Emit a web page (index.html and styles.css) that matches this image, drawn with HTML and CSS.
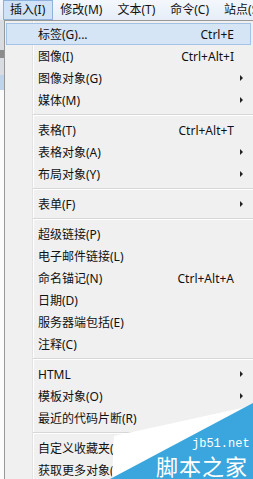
FILE: index.html
```html
<!DOCTYPE html>
<html>
  <head>
    <meta charset="UTF-8">
    <title>插入菜单</title>
    <link rel="stylesheet" href="styles.css">
  </head>
  <body>
    <div class="screen">
      <div class="menubar">
        <span class="bar-item active">插入(I)</span>
        <span class="bar-item">修改(M)</span>
        <span class="bar-item">文本(T)</span>
        <span class="bar-item">命令(C)</span>
        <span class="bar-item">站点(S)</span>
      </div>

      <div class="workarea">
        <div class="backdrop">
          <div class="bd-light"></div>
          <div class="bd-dark"></div>
          <div class="bd-light short"></div>
          <div class="bd-blue"></div>
          <div class="bd-white"></div>
        </div>

        <div class="dropdown">
          <div class="item hover"><span class="label">标签(G)...</span><span class="keys">Ctrl+E</span><span class="sub"></span></div>
          <div class="item"><span class="label">图像(I)</span><span class="keys">Ctrl+Alt+I</span><span class="sub"></span></div>
          <div class="item"><span class="label">图像对象(G)</span><span class="sub arrow"></span></div>
          <div class="item"><span class="label">媒体(M)</span><span class="sub arrow"></span></div>
          <div class="sep"></div>
          <div class="item"><span class="label">表格(T)</span><span class="keys">Ctrl+Alt+T</span><span class="sub"></span></div>
          <div class="item"><span class="label">表格对象(A)</span><span class="sub arrow"></span></div>
          <div class="item"><span class="label">布局对象(Y)</span><span class="sub arrow"></span></div>
          <div class="sep"></div>
          <div class="item"><span class="label">表单(F)</span><span class="sub arrow"></span></div>
          <div class="sep"></div>
          <div class="item"><span class="label">超级链接(P)</span><span class="sub"></span></div>
          <div class="item"><span class="label">电子邮件链接(L)</span><span class="sub"></span></div>
          <div class="item"><span class="label">命名锚记(N)</span><span class="keys">Ctrl+Alt+A</span><span class="sub"></span></div>
          <div class="item"><span class="label">日期(D)</span><span class="sub"></span></div>
          <div class="item"><span class="label">服务器端包括(E)</span><span class="sub"></span></div>
          <div class="item"><span class="label">注释(C)</span><span class="sub"></span></div>
          <div class="sep"></div>
          <div class="item"><span class="label">HTML</span><span class="sub arrow"></span></div>
          <div class="item"><span class="label">模板对象(O)</span><span class="sub arrow"></span></div>
          <div class="item"><span class="label">最近的代码片断(R)</span><span class="sub"></span></div>
          <div class="sep"></div>
          <div class="item"><span class="label">自定义收藏夹(U)</span><span class="sub"></span></div>
          <div class="item"><span class="label">获取更多对象(B)</span><span class="sub"></span></div>
        </div>
      </div>

      <!-- site watermark in the corner -->
      <div class="watermark">
        <svg width="153" height="79" viewBox="0 0 153 79">
          <polygon points="14,36 151,6 12,79" fill="#ffffff"/>
          <polygon points="153,3 153,79 10,79" fill="#3aa6dd"/>
        </svg>
        <div class="wm-url">jb51.net</div>
        <div class="wm-name">脚本之家</div>
      </div>
    </div>
  </body>
</html>
```

FILE: styles.css
```css
body {
  margin: 0;
  padding: 0;
  background: #f0f0f0;
  font-family: "Noto Sans", "Noto Sans CJK SC", sans-serif;
  font-size: 12px;
  color: #111;
}
.screen {
  position: relative;
  width: 253px;
  height: 479px;
  overflow: hidden;
}

/* top menu bar */
.menubar {
  display: flex;
  height: 20px;
  padding-left: 3px;
  background: linear-gradient(#f4f8fd, #e6edf7);
  white-space: nowrap;
}
.bar-item {
  display: flex;
  align-items: center;
  padding: 0 7px 0 6px;
  border: 1px solid transparent;
  line-height: 18px;
}
.bar-item.active {
  background: #cfe2f6;
  border-color: #8fb2da;
}

.workarea {
  display: flex;
  height: 459px;
}

/* bits of the window behind the menu */
.backdrop {
  display: flex;
  flex-direction: column;
  width: 4px;
  flex-shrink: 0;
  background: #fbfbfb;
}
.bd-light {
  height: 30px;
  background: #d9dde2;
}
.bd-light.short {
  height: 17px;
}
.bd-dark {
  height: 8px;
  background: #8c8c8c;
}
.bd-blue {
  height: 15px;
  background: #bfd3ea;
}
.bd-white {
  flex: 1;
  background: #fbfbfb;
}

/* dropdown */
.dropdown {
  flex: 1;
  border-left: 1px solid #979797;
  border-top: 1px solid #979797;
  padding-top: 2px;
  background: linear-gradient(to right, transparent 27px, #e3e3e3 27px, #e3e3e3 28px, #ffffff 28px, #ffffff 29px, transparent 29px), #f0f0f0;
}
.item {
  display: flex;
  align-items: center;
  height: 22px;
  box-sizing: border-box;
  margin: 0 2px 0 1px;
  padding-left: 31px;
  border: 1px solid transparent;
  white-space: nowrap;
}
.item.hover {
  background: #d6e5f6;
  border-color: #a3c2e6;
}
.label {
  flex: 1;
}
.keys {
  text-align: right;
}
.sub {
  width: 16px;
  flex-shrink: 0;
  display: flex;
  justify-content: flex-start;
  padding-left: 6px;
  box-sizing: border-box;
}
.sub.arrow::before {
  content: "";
  border-left: 3px solid #222;
  border-top: 3px solid transparent;
  border-bottom: 3px solid transparent;
}
.sep {
  margin: 3px 0 3px 28px;
  border-top: 1px solid #d7d7d7;
  border-bottom: 1px solid #ffffff;
  height: 0;
}

/* watermark overlay */
.watermark {
  position: absolute;
  left: 100px;
  top: 400px;
  width: 153px;
  height: 79px;
}
.watermark svg {
  display: block;
}
.wm-url {
  position: absolute;
  left: 92px;
  top: 38px;
  font-family: "Liberation Mono", monospace;
  font-size: 12px;
  color: #ffffff;
  line-height: 12px;
}
.wm-name {
  position: absolute;
  left: 56px;
  top: 53px;
  font-family: "Noto Sans CJK SC", sans-serif;
  font-size: 22px;
  line-height: 24px;
  color: #ffffff;
  letter-spacing: 1px;
}
```
